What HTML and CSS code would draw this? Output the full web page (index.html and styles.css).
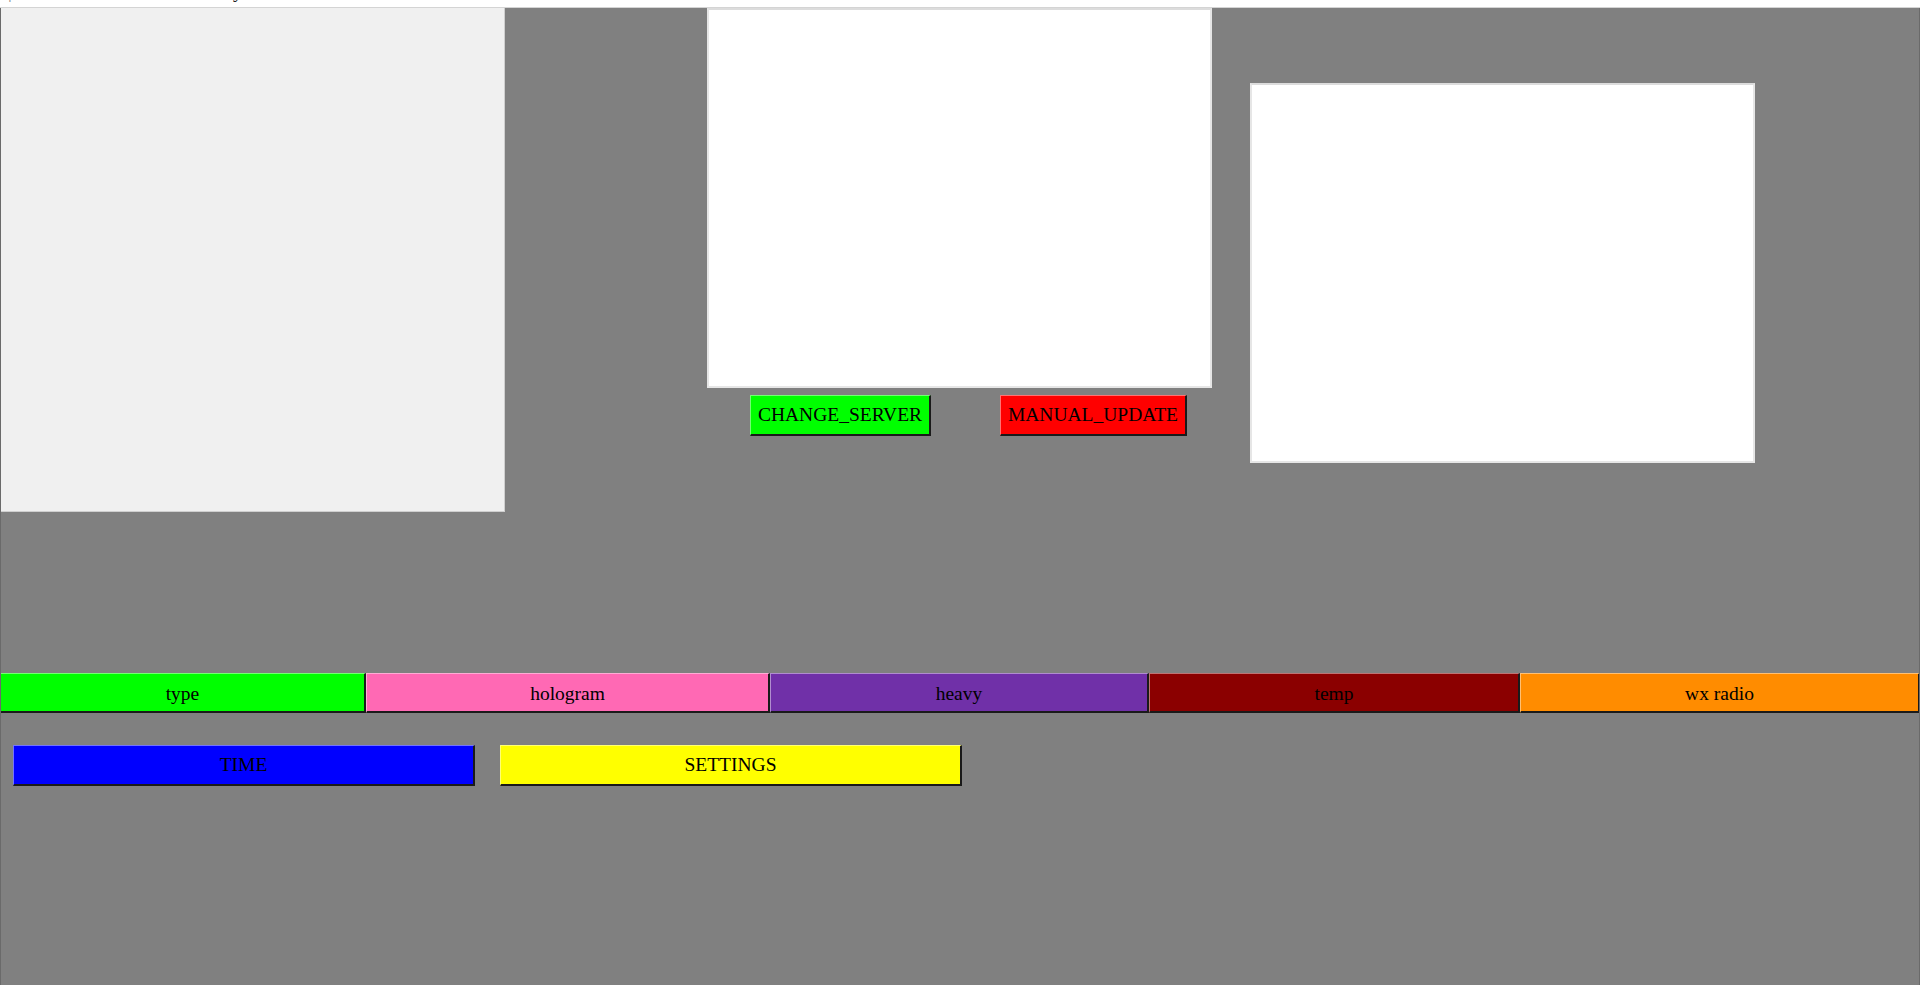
FILE: index.html
```html
<!DOCTYPE html>
<html>
<head>
<meta charset="utf-8">
<link rel="stylesheet" href="styles.css">
</head>
<body>
<div class="topline">
  <span class="frag f1">|</span><span class="frag f2">y</span><span class="frag f3">_</span><span class="frag f4">_</span>
</div>
<div class="main">
  <div class="toprow">
    <div class="panel-left"></div>
    <div class="midcol">
      <div class="panel-white"></div>
      <div class="midbtns">
        <div class="btn btn-server">CHANGE_SERVER</div>
        <div class="btn btn-update">MANUAL_UPDATE</div>
      </div>
    </div>
    <div class="panel-white panel-right"></div>
  </div>
  <div class="tabs">
    <div class="btn tab t-type">type</div>
    <div class="btn tab t-holo">hologram</div>
    <div class="btn tab t-heavy">heavy</div>
    <div class="btn tab t-temp">temp</div>
    <div class="btn tab t-wx">wx radio</div>
  </div>
  <div class="bottomrow">
    <div class="btn big t-time">TIME</div>
    <div class="btn big t-settings">SETTINGS</div>
  </div>
</div>
</body>
</html>
```
FILE: styles.css
```css
html, body {
  margin: 0;
  padding: 0;
  background: #ffffff;
  font-family: "Liberation Serif", "Times New Roman", serif;
  color: #000;
}
body {
  width: 1920px;
  height: 985px;
  overflow: hidden;
}
.topline {
  height: 8px;
  border-bottom: 1px solid #d4d4d4;
  box-sizing: border-box;
  position: relative;
  overflow: hidden;
  font-size: 19px;
  line-height: 8px;
}
.frag {
  position: absolute;
  top: -12px;
  color: #222;
}
.f1 { left: 8px; color: #888; }
.f2 { left: 233px; }
.f3 { left: 313px; }
.f4 { left: 354px; }
.main {
  height: 977px;
  background: #808080;
  border-left: 1px solid #6a6a6a;
  border-right: 1px solid #6a6a6a;
  box-sizing: border-box;
  overflow: hidden;
}
.toprow {
  display: flex;
  align-items: flex-start;
  margin-left: -1px;
  height: 504px;
}
.panel-left {
  width: 505px;
  height: 504px;
  background: #f0f0f0;
  border: 1px solid #cfcfcf;
  border-top: none;
  box-sizing: border-box;
}
.midcol {
  margin-left: 202px;
  width: 505px;
}
.panel-white {
  width: 505px;
  height: 380px;
  background: #ffffff;
  border: 2px solid #e6e6e6;
  border-top-color: #dcdcdc;
  box-sizing: border-box;
}
.panel-right {
  margin-left: 38px;
  margin-top: 75px;
}
.midbtns {
  display: flex;
  margin-top: 7px;
  padding-left: 43px;
  gap: 69px;
}
.btn {
  box-sizing: border-box;
  display: flex;
  align-items: center;
  justify-content: center;
  font-size: 19.5px;
  height: 41px;
  border-top: 1px solid rgba(255,255,255,0.45);
  border-left: 1px solid rgba(255,255,255,0.45);
  border-bottom: 2px solid #1a1a1a;
  border-right: 2px solid #1a1a1a;
  white-space: nowrap;
}
.btn-server { width: 181px; background: #00ff00; }
.btn-update { width: 187px; background: #ff0000; }
.tabs {
  display: flex;
  margin-top: 161px;
  margin-left: -1px;
  margin-right: -1px;
}
.tab {
  height: 40px;
  padding-top: 2px;
}
.t-type { width: 366px; background: #00ff00; }
.t-holo { width: 404px; background: #ff69b4; }
.t-heavy { width: 379px; background: #7030a8; }
.t-temp { width: 371px; background: #8b0000; }
.t-wx { width: 400px; background: #ff8c00; }
.bottomrow {
  display: flex;
  margin-top: 32px;
  padding-left: 12px;
  gap: 25px;
}
.big {
  width: 462px;
  height: 41px;
}
.t-time { background: #0000ff; }
.t-settings { background: #ffff00; }
```
